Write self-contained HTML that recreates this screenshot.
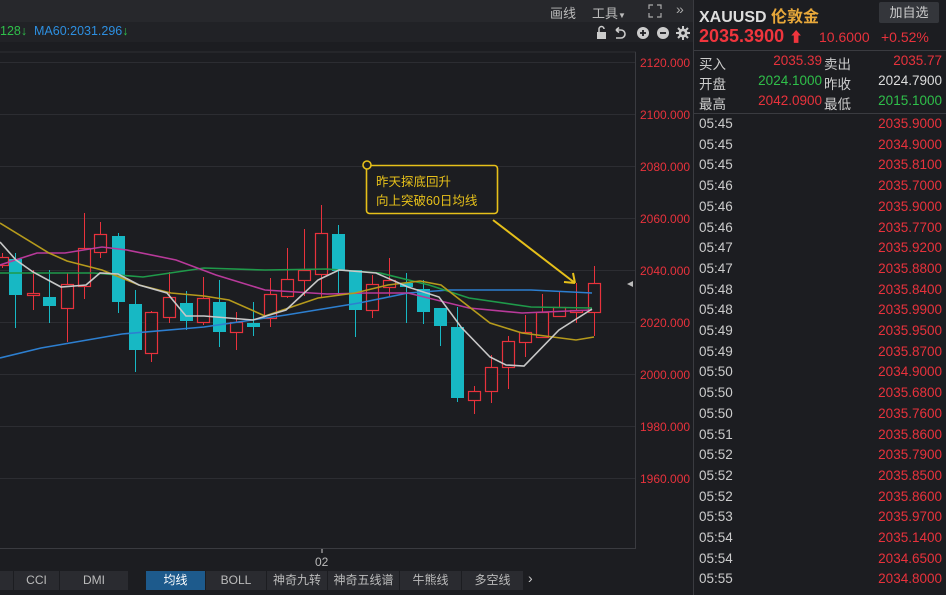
<!DOCTYPE html>
<html><head><meta charset="utf-8"><style>
*{margin:0;padding:0;box-sizing:border-box}
body{width:946px;height:595px;background:#1c1d21;font-family:"Liberation Sans","Noto Sans CJK SC",sans-serif;position:relative;overflow:hidden;color:#ccc}
.abs{position:absolute}
.top{left:0;top:0;width:693px;height:22px;background:#27282c}
.bar2{left:0;top:22px;width:693px;height:20px;background:#212226}
.rp{left:693px;top:0;width:253px;height:595px;background:#1c1d21;border-left:1px solid #3a3b40}
.row{position:absolute;left:5px;width:243px;font-size:13.5px;height:20px}
.row span{position:absolute}
.tab{position:absolute;top:571px;height:19px;font-size:12px;color:#bbb;text-align:center;line-height:19px;background:#2a2b30;border-right:1px solid #1c1d21}
</style></head><body>
<div class="abs top"></div>
<div class="abs bar2"></div>
<div class="abs" style="left:550px;top:3px;font-size:13px;color:#bbb">画线</div>
<div class="abs" style="left:592px;top:3px;font-size:13px;color:#bbb">工具<span style="font-size:8px">▼</span></div>
<svg class="abs" style="left:648px;top:4px" width="14" height="14" viewBox="0 0 14 14"><path d="M1 5V1h4M9 1h4v4M13 9v4H9M5 13H1V9" stroke="#aaa" fill="none" stroke-width="1.2"/></svg>
<div class="abs" style="left:676px;top:1px;font-size:14px;color:#aaa">»</div>
<div class="abs" style="left:0;top:24px;font-size:12.5px;color:#2fbf4a">128↓</div>
<div class="abs" style="left:34px;top:24px;font-size:12.5px;color:#2d8fe0">MA60:2031.296<span style="color:#2fbf4a">↓</span></div>
<svg class="abs" style="left:596px;top:25px" width="96" height="16" viewBox="0 0 96 16">
<rect x="1" y="7" width="9" height="7" fill="#ccc"/><path d="M3 7V4a2.5 2.5 0 0 1 5 0" stroke="#ccc" fill="none" stroke-width="1.5"/>
<path d="M20 5h5a4 4 0 0 1 0 8h-5M20 5l3-2.5M20 5l3 2.5" stroke="#ccc" fill="none" stroke-width="1.6"/>
<circle cx="47" cy="8" r="6" fill="#ccc"/><path d="M44 8h6M47 5v6" stroke="#1c1d21" stroke-width="1.8"/>
<circle cx="67" cy="8" r="6" fill="#ccc"/><path d="M64 8h6" stroke="#1c1d21" stroke-width="1.8"/>
<circle cx="87" cy="8" r="4.5" fill="#ccc"/><path d="M87 1v14M80 8h14M82 3l10 10M92 3L82 13" stroke="#ccc" stroke-width="2"/><circle cx="87" cy="8" r="1.8" fill="#1c1d21"/>
</svg>
<svg class="abs" style="left:0;top:42px" width="693" height="553" xmlns="http://www.w3.org/2000/svg">
<g transform="translate(0,-42)">
<line x1="0" y1="52" x2="636" y2="52" stroke="#2e2f34"/>
<line x1="635.5" y1="52" x2="635.5" y2="548" stroke="#3a3b40"/>
<line x1="0" y1="548.5" x2="636" y2="548.5" stroke="#3a3b40"/>
<g stroke="#2c2d32">
<line x1="0" y1="62.5" x2="635" y2="62.5"/><line x1="0" y1="114.5" x2="635" y2="114.5"/><line x1="0" y1="166.5" x2="635" y2="166.5"/><line x1="0" y1="218.5" x2="635" y2="218.5"/><line x1="0" y1="270.5" x2="635" y2="270.5"/><line x1="0" y1="322.5" x2="635" y2="322.5"/><line x1="0" y1="374.5" x2="635" y2="374.5"/><line x1="0" y1="426.5" x2="635" y2="426.5"/><line x1="0" y1="478.5" x2="635" y2="478.5"/></g>
<g fill="#e8323c" font-size="12" font-family="Liberation Sans">
<text x="640" y="67">2120.000</text><text x="640" y="119">2100.000</text><text x="640" y="171">2080.000</text><text x="640" y="223">2060.000</text><text x="640" y="275">2040.000</text><text x="640" y="327">2020.000</text><text x="640" y="379">2000.000</text><text x="640" y="431">1980.000</text><text x="640" y="483">1960.000</text></g>
<path d="M627 284l6-3v6z" fill="#bbb"/>
<line x1="322" y1="549" x2="322" y2="553" stroke="#ccc"/>
<text x="315" y="566" fill="#bbb" font-size="12">02</text>
<g id="c"></g>
<g fill="none" stroke-width="1.6">
<polyline stroke="#2d7fd0" points="0,358 41,348 122,334 204,327 286,315 359,303 408,293 449,290 531,290 592,293"/>
<polyline stroke="#1f9a4a" points="0,273 41,273 94,273 143,277 204,268 265,270 327,269 380,273 429,285 469,298 531,307 592,308"/>
<polyline stroke="#b83a9a" points="0,265 37,253 65,253 102,247 127,250 176,260 216,275 265,290 327,294 367,293 408,293 469,308 522,313 592,310"/>
<polyline stroke="#b59a1c" points="0,223 49,253 67,261 102,270 139,285 171,293 204,296 229,300 265,316 318,298 355,293 388,285 420,281 441,285 490,323 522,333 576,340 594,337"/>
<polyline stroke="#c8c8c8" points="0,242 16,260 33,272 61,287 86,285 100,273 118,274 139,285 167,293 186,316 204,316 253,320 286,310 318,280 339,270 376,273 408,287 439,297 461,327 490,357 506,365 524,366 559,330 592,309"/>
</g>
<rect x="366.5" y="165.5" width="131" height="48" rx="3" fill="#1c1d21" stroke="#e6c01a" stroke-width="1.6"/>
<circle cx="367" cy="165" r="4" fill="#1c1d21" stroke="#e6c01a" stroke-width="1.6"/>
<text x="376" y="186" fill="#e6c01a" font-size="12.5" font-family="Liberation Sans,Noto Sans CJK SC">昨天探底回升</text>
<text x="376" y="205" fill="#e6c01a" font-size="12.5" font-family="Liberation Sans,Noto Sans CJK SC">向上突破60日均线</text>
<path d="M493 220L575 283M575 283l-11-1M575 283l-2-10" stroke="#e6c01a" stroke-width="2" fill="none"/>
</g></svg>
<div class="tab" style="left:0;width:14px"></div>
<div class="tab" style="left:14px;width:46px">CCI</div>
<div class="tab" style="left:60px;width:69px">DMI</div>
<div class="tab" style="left:146px;width:60px;background:#1d5a8c;color:#fff">均线</div>
<div class="tab" style="left:206px;width:61px">BOLL</div>
<div class="tab" style="left:267px;width:61px">神奇九转</div>
<div class="tab" style="left:328px;width:72px">神奇五线谱</div>
<div class="tab" style="left:400px;width:62px">牛熊线</div>
<div class="tab" style="left:462px;width:62px">多空线</div>
<div class="abs" style="left:528px;top:570px;color:#ccc;font-size:14px">›</div>
<div class="abs rp">
<div class="abs" style="left:5px;top:3px;font-size:16px;font-weight:bold;color:#ddd">XAUUSD <span style="color:#e8a83a">伦敦金</span></div>
<div class="abs" style="left:185px;top:2px;width:60px;height:21px;background:#34363b;border-radius:2px;font-size:13px;color:#ccc;text-align:center;line-height:21px">加自选</div>
<div class="abs" style="left:5px;top:26px;font-size:18px;font-weight:bold;color:#f0353d">2035.3900 <span style="font-size:14px">⬆</span></div>
<div class="abs" style="left:125px;top:29px;font-size:14px;color:#e8323c">10.6000</div>
<div class="abs" style="left:187px;top:29px;font-size:14px;color:#e8323c">+0.52%</div>
<div class="abs" style="left:0;top:50px;width:253px;border-top:1px solid #3a3b40"></div>
<div class="row" style="top:53px"><span style="left:0;color:#ccc">买入</span><span style="right:120px;color:#e8323c">2035.39</span><span style="left:125px;color:#ccc">卖出</span><span style="right:0;color:#e8323c">2035.77</span></div>
<div class="row" style="top:73px"><span style="left:0;color:#ccc">开盘</span><span style="right:120px;color:#2fbf4a">2024.1000</span><span style="left:125px;color:#ccc">昨收</span><span style="right:0;color:#ddd">2024.7900</span></div>
<div class="row" style="top:93px"><span style="left:0;color:#ccc">最高</span><span style="right:120px;color:#e8323c">2042.0900</span><span style="left:125px;color:#ccc">最低</span><span style="right:0;color:#2fbf4a">2015.1000</span></div>
<div class="abs" style="left:0;top:113px;width:253px;border-top:1px solid #3a3b40"></div>
<div id="ticks"></div>
</div>
<script>
var C=[[2,257,265,253,268,1],[15,259,295,253,328,0],[33,293,295,270,310,1],[49,297,306,270,323,0],[67,284,308,273,342,1],[84,248,286,213,299,1],[100,234,252,222,258,1],[118,236,302,233,313,0],[135,304,350,290,372,0],[151,312,353,311,362,1],[169,297,317,272,323,1],[186,303,321,291,330,0],[203,298,322,277,325,1],[219,302,332,280,347,0],[236,322,332,312,350,1],[253,323,327,302,336,0],[270,294,318,278,327,1],[287,279,296,248,298,1],[304,270,280,229,296,1],[321,233,274,205,298,1],[338,234,271,225,294,0],[355,270,310,270,337,0],[372,284,310,275,318,1],[389,280,287,258,297,1],[406,283,287,273,323,0],[423,289,312,280,324,0],[440,308,326,308,346,0],[457,327,398,307,402,0],[474,391,400,386,414,1],[491,367,391,355,403,1],[508,341,367,336,389,1],[525,332,342,315,357,1],[542,312,337,294,338,1],[559,307,316,292,317,1],[576,310,312,283,323,1],[594,283,312,266,336,1]];
var NS="http://www.w3.org/2000/svg",g=document.getElementById('c');
function el(n,a){var e=document.createElementNS(NS,n);for(var k in a)e.setAttribute(k,a[k]);g.appendChild(e);}
C.forEach(function(c){var x=c[0],col=c[5]?'#e8323c':'#17b8c4';
if(c[5]){el('line',{x1:x+.5,y1:c[3],x2:x+.5,y2:c[1],stroke:col});el('line',{x1:x+.5,y1:c[2],x2:x+.5,y2:c[4],stroke:col});
el('rect',{x:x-5.5,y:c[1]+.5,width:12,height:Math.max(c[2]-c[1],1),fill:'#1c1d21',stroke:col,'stroke-width':1.2});}
else{el('line',{x1:x+.5,y1:c[3],x2:x+.5,y2:c[4],stroke:col});el('rect',{x:x-6,y:c[1],width:13,height:Math.max(c[2]-c[1],2),fill:col});}});
var T=[["05:45","2035.9000"],["05:45","2034.9000"],["05:45","2035.8100"],["05:46","2035.7000"],["05:46","2035.9000"],["05:46","2035.7700"],["05:47","2035.9200"],["05:47","2035.8800"],["05:48","2035.8400"],["05:48","2035.9900"],["05:49","2035.9500"],["05:49","2035.8700"],["05:50","2034.9000"],["05:50","2035.6800"],["05:50","2035.7600"],["05:51","2035.8600"],["05:52","2035.7900"],["05:52","2035.8500"],["05:52","2035.8600"],["05:53","2035.9700"],["05:54","2035.1400"],["05:54","2034.6500"],["05:55","2034.8000"]];
var h='';T.forEach(function(t,i){h+='<div class="row" style="top:'+(116+i*20.7)+'px"><span style="left:0;color:#ccc">'+t[0]+'</span><span style="right:0;color:#e8323c">'+t[1]+'</span></div>';});
document.getElementById('ticks').innerHTML=h;
</script>
</body></html>
